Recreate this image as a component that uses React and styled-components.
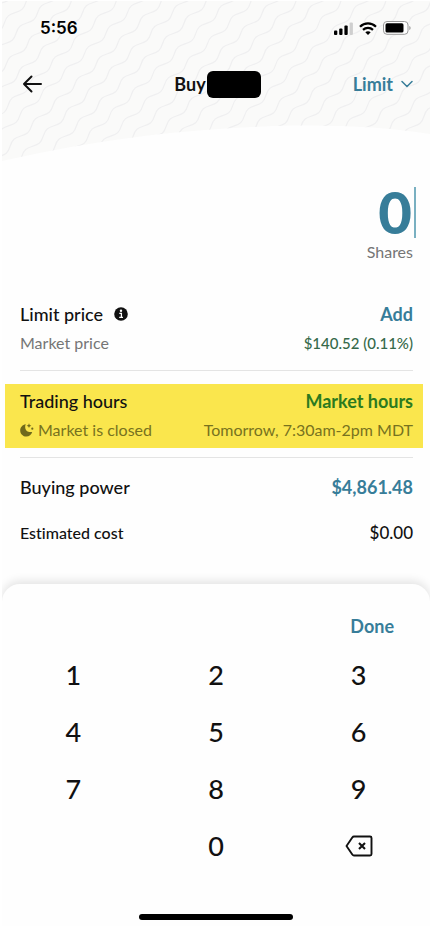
import React from "react";
import styled, { createGlobalStyle } from "styled-components";

const teal = "#377d99";

const GlobalStyle = createGlobalStyle`
  *, *::before, *::after { box-sizing: border-box; }
  body { margin: 0; background: #fff; }
  button, input { font: inherit; color: inherit; border: 0; padding: 0; background: none; }
  button { cursor: pointer; }
  svg { display: block; }
`;

const Screen = styled.main`
  display: flex;
  flex-direction: column;
  margin: 1px 1px 0 2px;
  background: #fefefe;
  color: #111;
  font-family: Lato, "Liberation Sans", sans-serif;
  font-size: 18px;
  font-variant-ligatures: none;
  line-height: 24px;
`;

const Header = styled.header`
  position: relative;
  height: 160px;
`;

const Backdrop = styled.svg`
  position: absolute;
  inset: 0;
  width: 100%;
  height: 100%;
`;

const StatusBar = styled.div`
  position: relative;
  display: flex;
  align-items: center;
  justify-content: space-between;
  padding: 15px 19px 0 38px;
  color: #000;
`;

const Clock = styled.time`
  font: 600 17px/24px Inter, sans-serif;
`;

const StatusIcons = styled.div`
  display: flex;
  align-items: center;
  gap: 6px;
`;

const NavBar = styled.nav`
  position: relative;
  display: grid;
  grid-template-columns: 1fr auto 1fr;
  align-items: center;
  height: 28px;
  margin-top: 30px;
  padding: 0 17px 0 20px;
`;

const BackButton = styled.button`
  justify-self: start;
`;

const Title = styled.h1`
  display: flex;
  align-items: center;
  gap: 1px;
  margin: 0;
  font-size: 18px;
  font-weight: 700;
`;

const Redaction = styled.span`
  width: 54px;
  height: 27px;
  border-radius: 6px;
  background: #000;
`;

const OrderType = styled.button`
  justify-self: end;
  display: flex;
  align-items: center;
  gap: 8px;
  color: ${teal};
  font-weight: 700;
`;

const Amount = styled.label`
  display: flex;
  flex-direction: column;
  align-items: flex-end;
  padding: 26px 17px 0 18px;
  color: #757575;
  font-size: 16px;
`;

const AmountField = styled.span`
  display: flex;
  justify-content: flex-end;
  width: 100%;
  margin-bottom: 2px;
`;

const AmountInput = styled.input`
  flex: 1;
  min-width: 0;
  height: 51px;
  padding: 0 2px 3px 0;
  color: ${teal};
  font-size: 58px;
  font-weight: 900;
  line-height: 48px;
  text-align: right;
  outline: none;
`;

const Caret = styled.span`
  width: 2px;
  height: 51px;
  margin-right: -3px;
  background: #79b0c1;
`;

const Details = styled.div`
  display: flex;
  flex-direction: column;
  padding: 36px 7px 0 3px;
`;

const Section = styled.section`
  display: flex;
  flex-direction: column;
  gap: 5px;
  padding: ${(p) => (p.$highlight ? "5px 10px 6px 15px" : "2px 10px 2px 15px")};
  background: ${(p) => (p.$highlight ? "#fae64d" : "none")};
`;

const Divider = styled.hr`
  width: auto;
  height: 1px;
  margin: ${(p) => (p.$below ? "9px 10px 16px 15px" : "13px 10px 13px 15px")};
  border: 0;
  background: #e4e4e4;
`;

const Row = styled.div`
  display: flex;
  align-items: center;
  justify-content: space-between;
`;

const Label = styled.span`
  display: flex;
  align-items: center;
  gap: ${(p) => (p.$gap || 0)}px;
  font-size: 18px;
  font-weight: 500;
`;

const SubText = styled.span`
  display: flex;
  align-items: center;
  gap: 4px;
  color: ${(p) => p.$color || "#757575"};
  font-size: ${(p) => p.$size || 16}px;
  font-weight: ${(p) => (p.$medium ? 500 : 400)};
`;

const LinkButton = styled.button`
  color: ${(p) => p.$color || teal};
  font-weight: 700;
`;

const Summary = styled.section`
  display: flex;
  flex-direction: column;
  gap: 22px;
  padding: 1px 10px 39px 15px;
`;

const Keypad = styled.section`
  display: flex;
  flex-direction: column;
  padding: 30px 0 6px;
  border-radius: 18px 18px 0 0;
  background: #fefefe;
  box-shadow: 0 -3px 10px rgba(0, 0, 0, 0.11);
  clip-path: inset(-20px 0 0 0);
`;

const DoneButton = styled.button`
  align-self: flex-end;
  margin-right: 36px;
  color: ${teal};
  font-weight: 700;
`;

const Keys = styled.div`
  display: grid;
  grid-template-columns: repeat(3, 1fr);
  grid-auto-rows: 57px;
  margin-top: 8px;
`;

const Key = styled.button`
  display: grid;
  place-items: center;
  grid-column: ${(p) => p.$column || "auto"};
  font-size: 27px;
  font-weight: 500;
`;

const HomeIndicator = styled.div`
  align-self: center;
  width: 36%;
  height: 6px;
  margin-top: 40px;
  border-radius: 3px;
  background: #000;
`;

const waveStep = "c2.2 -7 4.5 -8.2 10.75 -10.25s8.55 -3.25 10.75 -10.25";
const waveLine = "M-431.7 586" + waveStep.repeat(50);

function WaveBackdrop() {
  return (
    <Backdrop viewBox="0 0 428 160" preserveAspectRatio="none" aria-hidden="true">
      <defs>
        <clipPath id="hill">
          <path d="M0 0H428V133C350 121 255 122 142 135Q70 144 0 160Z" />
        </clipPath>
      </defs>
      <g clipPath="url(#hill)">
        <rect width="428" height="160" fill="#fafaf9" />
        <g fill="none" stroke="#efeff0" strokeWidth="1.2">
          {Array.from({ length: 34 }, (_, i) => (
            <path key={i} d={waveLine} transform={`translate(${(i - 9) * 11.7} ${(i - 9) * 10.3})`} />
          ))}
        </g>
      </g>
    </Backdrop>
  );
}

function SignalIcon() {
  return (
    <svg width="19" height="13" viewBox="0 0 19 13" role="img" aria-label="Signal">
      <rect x="0" y="8.5" width="3.3" height="4.5" rx="1" />
      <rect x="5.2" y="6.5" width="3.3" height="6.5" rx="1" />
      <rect x="10.4" y="3.5" width="3.3" height="9.5" rx="1" />
      <rect x="15.6" y="0.5" width="3.3" height="12.5" rx="1" fill="#cfcfcf" />
    </svg>
  );
}

function WifiIcon() {
  return (
    <svg width="18" height="13" viewBox="0 0 18 13" role="img" aria-label="Wi-Fi">
      <g fill="none" stroke="#000" strokeWidth="2.2">
        <path d="M1 4.7C5.5 0.2 12.5 0.2 17 4.7" />
        <path d="M4 7.9C6.8 5.2 11.2 5.2 14 7.9" />
      </g>
      <path d="M6.3 10.2C7.8 8.9 10.2 8.9 11.7 10.2L9 13Z" />
    </svg>
  );
}

function BatteryIcon() {
  return (
    <svg width="28" height="14" viewBox="0 0 28 14" role="img" aria-label="Battery">
      <rect x="0.5" y="0.5" width="24.5" height="12.8" rx="3.5" fill="#fff" stroke="#999" />
      <rect x="2.5" y="2.3" width="18" height="9.2" rx="1.6" />
      <path d="M26.3 5C28 5.5 28 8.5 26.3 9Z" fill="#999" />
    </svg>
  );
}

function BackIcon() {
  return (
    <svg width="21" height="18" viewBox="0 0 21 18" fill="none" stroke="#111" strokeWidth="2" strokeLinecap="round" strokeLinejoin="round">
      <path d="M19 9H2M9.5 1.5L2 9L9.5 16.5" />
    </svg>
  );
}

function ChevronIcon() {
  return (
    <svg width="12" height="8" viewBox="0 0 12 8" fill="none" stroke={teal} strokeWidth="1.5" strokeLinecap="round" strokeLinejoin="round">
      <path d="M1 1.5L6 6.5L11 1.5" />
    </svg>
  );
}

function InfoIcon() {
  return (
    <svg width="14" height="14" viewBox="0 0 14 14">
      <circle cx="7" cy="7" r="6.8" fill="#111" />
      <circle cx="7" cy="3.8" r="1.2" fill="#fff" />
      <path d="M5.3 6.3H7.4V10.3M5.2 10.3H9" fill="none" stroke="#fff" strokeWidth="1.3" />
    </svg>
  );
}

function MoonIcon() {
  return (
    <svg width="14" height="14" viewBox="0 0 14 14" fill="#6f6a1c">
      <path d="M5.8 1.2C2.5 1.7 0.2 4.3 0.2 7.5C0.2 11 3 13.6 6.3 13.6C9.2 13.6 11.6 11.7 12.2 9C9 9.2 6.3 8.3 5.5 5.9C5 4.3 5.1 2.6 5.8 1.2Z" />
      <path d="M9 0.3L9.7 2L11.4 2.7L9.7 3.4L9 5.1L8.3 3.4L6.6 2.7L8.3 2Z" />
      <circle cx="12.3" cy="5.7" r="1.1" />
    </svg>
  );
}

function BackspaceIcon() {
  return (
    <svg width="28" height="22" viewBox="0 0 28 22" fill="none" stroke="#111" strokeWidth="1.9" strokeLinejoin="round" strokeLinecap="round">
      <path d="M9 1.5H25Q26.5 1.5 26.5 3V19Q26.5 20.5 25 20.5H9Q8 20.5 7.3 19.5L1.5 11L7.3 2.5Q8 1.5 9 1.5Z" />
      <path d="M14 8L20 14M20 8L14 14" strokeLinecap="butt" strokeWidth="2.1" />
    </svg>
  );
}

const digits = ["1", "2", "3", "4", "5", "6", "7", "8", "9"];

export default function App() {
  return (
    <>
      <GlobalStyle />
      <Screen>
        <Header>
          <WaveBackdrop />
          <StatusBar>
            <Clock>5:56</Clock>
            <StatusIcons>
              <SignalIcon />
              <WifiIcon />
              <BatteryIcon />
            </StatusIcons>
          </StatusBar>
          <NavBar>
            <BackButton aria-label="Back"><BackIcon /></BackButton>
            <Title>Buy<Redaction /></Title>
            <OrderType>Limit<ChevronIcon /></OrderType>
          </NavBar>
        </Header>

        <Amount>
          <AmountField>
            <AmountInput type="text" inputMode="numeric" defaultValue="0" />
            <Caret />
          </AmountField>
          Shares
        </Amount>

        <Details>
          <Section>
            <Row>
              <Label $gap={11}>Limit price<InfoIcon /></Label>
              <LinkButton>Add</LinkButton>
            </Row>
            <Row>
              <SubText>Market price</SubText>
              <SubText $color="#35694a" $size={15} $medium>$140.52 (0.11%)</SubText>
            </Row>
          </Section>
          <Divider />
          <Section $highlight>
            <Row>
              <Label>Trading hours</Label>
              <LinkButton $color="#2b7a1f">Market hours</LinkButton>
            </Row>
            <Row>
              <SubText $color="#77721f"><MoonIcon />Market is closed</SubText>
              <SubText $color="#77721f">Tomorrow, 7:30am-2pm MDT</SubText>
            </Row>
          </Section>
          <Divider $below />
          <Summary>
            <Row>
              <Label>Buying power</Label>
              <LinkButton>$4,861.48</LinkButton>
            </Row>
            <Row>
              <SubText $color="#111" $medium>Estimated cost</SubText>
              <SubText $color="#111" $size={17} $medium>$0.00</SubText>
            </Row>
          </Summary>
        </Details>

        <Keypad>
          <DoneButton>Done</DoneButton>
          <Keys>
            {digits.map((d) => <Key key={d}>{d}</Key>)}
            <Key $column={2}>0</Key>
            <Key aria-label="Delete"><BackspaceIcon /></Key>
          </Keys>
          <HomeIndicator />
        </Keypad>
      </Screen>
    </>
  );
}
